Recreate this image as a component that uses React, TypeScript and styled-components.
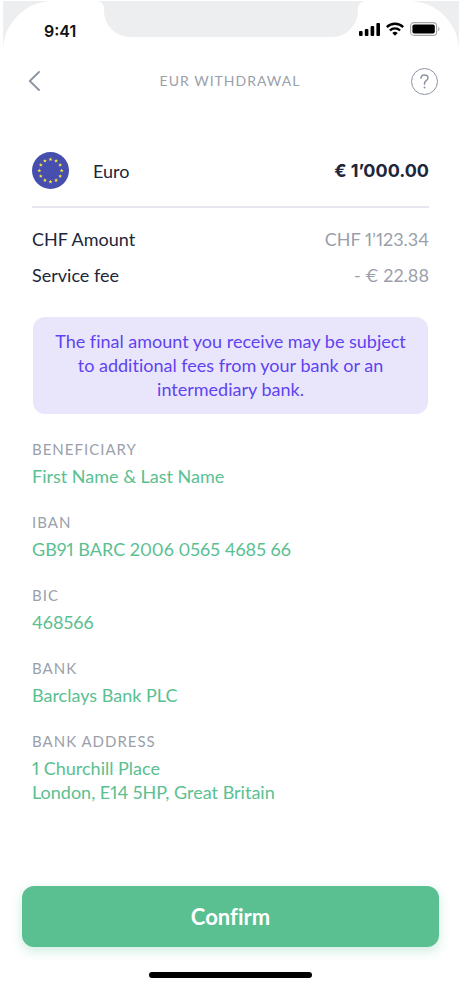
import React from "react";
import styled, { createGlobalStyle } from "styled-components";

const color = {
  ink: "#20263a",
  muted: "#9a9fab",
  green: "#5ac091",
  violet: "#5f43f0",
  lilac: "#e9e6fc",
  line: "#e7e7ef",
  bezel: "#edeef0",
};

const GlobalStyle = createGlobalStyle`
  *, *::before, *::after { box-sizing: border-box; }
  body {
    margin: 0;
    background: #fff;
    font-family: Lato, "Open Sans", sans-serif;
    font-variant-ligatures: none;
    font-variant-numeric: proportional-nums;
    color: ${color.ink};
  }
  button { font: inherit; border: 0; padding: 0; cursor: pointer; }
`;

const Device = styled.div`
  min-height: 100vh;
  padding: 1px 1px 0 3px;
  display: flex;
`;

const Bezel = styled.div`
  flex: 1;
  display: flex;
  background: linear-gradient(${color.bezel} 56px, #fff 56px);
`;

const Screen = styled.div`
  flex: 1;
  display: flex;
  flex-direction: column;
  background: #fff;
  border-radius: 50px 50px 0 0;
`;

const StatusBar = styled.div`
  display: grid;
  grid-template-columns: 101px 1fr 101px;
  height: 50px;
`;

const Time = styled.time`
  padding: 20px 0 0 41px;
  font: 600 16px/20px Inter, sans-serif;
  color: #111;
`;

const Notch = styled.div`
  position: relative;
  height: 36px;
  border-radius: 0 0 26px 26px;
  background: ${color.bezel};

  &::before,
  &::after {
    content: "";
    position: absolute;
    top: 0;
    width: 8px;
    height: 8px;
  }
  &::before {
    right: 100%;
    background: radial-gradient(circle at 0 100%, #fff 8px, ${color.bezel} 8px);
  }
  &::after {
    left: 100%;
    background: radial-gradient(circle at 100% 100%, #fff 8px, ${color.bezel} 8px);
  }
`;

const Indicators = styled.div`
  display: flex;
  gap: 6px;
  align-items: center;
  height: 14px;
  margin: 21px 0 0 1px;
`;

const Header = styled.header`
  display: flex;
  align-items: center;
  justify-content: space-between;
  height: 60px;
  padding: 0 21px 0 16px;
`;

const Title = styled.h1`
  margin: 0;
  font-size: 14px;
  line-height: 20px;
  font-weight: 400;
  letter-spacing: 1px;
  color: ${color.muted};
`;

const IconButton = styled.button`
  display: flex;
  align-items: center;
  justify-content: center;
  width: 30px;
  height: 30px;
  background: none;
  color: #8d93a3;
`;

const HelpButton = styled(IconButton)`
  width: 27px;
  height: 27px;
  border: 1px solid #8d93a3;
  border-radius: 50%;
`;

const Main = styled.main`
  flex: 1;
  padding: 0 30px 0 29px;
  font-size: 18px;
  line-height: 24px;
`;

const Currency = styled.section`
  display: flex;
  align-items: center;
  margin-top: 24px;
  height: 73px;
  border-bottom: 2px solid ${color.line};
`;

const CurrencyName = styled.span`
  flex: 1;
  margin-left: 24px;
`;

const Amount = styled.strong`
  font-family: Inter, sans-serif;
  font-weight: 700;
`;

const Summary = styled.dl`
  display: grid;
  grid-template-columns: 1fr auto;
  row-gap: 12px;
  margin: 19px 0 30px;

  dt, dd { margin: 0; }
  dd { color: ${color.muted}; text-align: right; }
`;

const Notice = styled.p`
  margin: 0 1px 24px;
  padding: 12px 16px 13px;
  border-radius: 12px;
  background: ${color.lilac};
  color: ${color.violet};
  text-align: center;
`;

const Details = styled.dl`
  display: grid;
  gap: 23px;
  margin: 0;
`;

const Label = styled.dt`
  margin-bottom: 4px;
  font-size: 15px;
  line-height: 22px;
  letter-spacing: 1px;
  color: ${color.muted};
`;

const Value = styled.dd`
  margin: 0;
  color: ${color.green};
  white-space: pre-line;
`;

const Footer = styled.footer`
  display: flex;
  flex-direction: column;
  align-items: center;
  gap: 25px;
  padding: 24px 20px 6px 19px;
`;

const ConfirmButton = styled.button`
  && {
    width: 100%;
    height: 61px;
    border-radius: 12px;
    background: ${color.green};
    box-shadow: 0 4px 12px rgba(90, 192, 145, 0.3);
    color: #fff;
    font-size: 22px;
    font-weight: 700;
  }
`;

const HomeIndicator = styled.div`
  width: 163px;
  height: 6px;
  border-radius: 3px;
  background: #000;
`;

const details = [
  { label: "BENEFICIARY", value: "First Name & Last Name" },
  { label: "IBAN", value: "GB91 BARC 2006 0565 4685 66" },
  { label: "BIC", value: "468566" },
  { label: "BANK", value: "Barclays Bank PLC" },
  { label: "BANK ADDRESS", value: "1 Churchill Place\nLondon, E14 5HP, Great Britain" },
];

function Signal() {
  return (
    <svg width="21" height="14" viewBox="0 0 21 14" aria-hidden="true">
      <rect x="0" y="9" width="3.6" height="5" rx="1" />
      <rect x="5.8" y="7" width="3.6" height="7" rx="1" />
      <rect x="11.6" y="4" width="3.6" height="10" rx="1" />
      <rect x="17.4" y="1" width="3.6" height="13" rx="1" />
    </svg>
  );
}

function Wifi() {
  return (
    <svg width="18" height="14" viewBox="0 0 18 14" fill="none" stroke="#000" strokeWidth="2.3" aria-hidden="true">
      <path d="M.8 5.1a11.7 11.7 0 0 1 16.4 0" />
      <path d="M3.9 8.5a7.3 7.3 0 0 1 10.2 0" />
      <path d="M6.3 11a3.9 3.9 0 0 1 5.4 0L9 13.7z" fill="#000" stroke="none" />
    </svg>
  );
}

function Battery() {
  return (
    <svg width="30" height="14" viewBox="0 0 30 14" aria-hidden="true">
      <rect x=".6" y=".6" width="26" height="12.8" rx="3.4" fill="none" stroke="#a6a6a6" strokeWidth="1.1" />
      <rect x="2.4" y="2.4" width="22.4" height="9.2" rx="1.8" />
      <path d="M28.2 4.7c1.8.8 1.8 3.8 0 4.6z" fill="#a6a6a6" />
    </svg>
  );
}

function EuroFlag() {
  return (
    <svg width="37" height="37" viewBox="0 0 37 37" aria-hidden="true">
      <circle cx="18.5" cy="18.5" r="18.5" fill="#464fae" />
      {Array.from({ length: 12 }, (_, i) => (
        <path
          key={i}
          fill="#f4e33d"
          transform={`translate(${18.5 + 11.2 * Math.sin((i * Math.PI) / 6)} ${18.5 - 11.2 * Math.cos((i * Math.PI) / 6)})`}
          d="M0-1.9.6-.6 1.9-.5.9.4 1.2 1.7 0 1-1.2 1.7-.9.4-1.9-.5-.6-.6z"
        />
      ))}
    </svg>
  );
}

export default function App() {
  return (
    <>
      <GlobalStyle />
      <Device>
        <Bezel>
          <Screen>
            <StatusBar>
              <Time>9:41</Time>
              <Notch />
              <Indicators>
                <Signal />
                <Wifi />
                <Battery />
              </Indicators>
            </StatusBar>
            <Header>
              <IconButton type="button" aria-label="Back">
                <svg width="12" height="20" viewBox="0 0 12 20" fill="none" stroke="currentColor" strokeWidth="1.8" strokeLinecap="round" strokeLinejoin="round">
                  <path d="M11 1 1.8 10l9.2 9" />
                </svg>
              </IconButton>
              <Title>EUR WITHDRAWAL</Title>
              <HelpButton type="button" aria-label="Help">
                <svg width="9" height="15" viewBox="0 0 9 15" fill="none" stroke="currentColor" strokeWidth="1.5" strokeLinecap="round">
                  <path d="M1 4.2C1 2.1 2.5 1 4.5 1S8 2.2 8 4c0 2.5-3.5 2.6-3.5 5.2v1" />
                  <path d="M4.5 13.4v.2" strokeWidth="1.9" />
                </svg>
              </HelpButton>
            </Header>
            <Main>
              <Currency>
                <EuroFlag />
                <CurrencyName>Euro</CurrencyName>
                <Amount>€ 1’000.00</Amount>
              </Currency>
              <Summary>
                <dt>CHF Amount</dt>
                <dd>CHF 1’123.34</dd>
                <dt>Service fee</dt>
                <dd>- € 22.88</dd>
              </Summary>
              <Notice>
                The final amount you receive may be subject to additional fees from your bank or an intermediary bank.
              </Notice>
              <Details>
                {details.map(({ label, value }) => (
                  <div key={label}>
                    <Label>{label}</Label>
                    <Value>{value}</Value>
                  </div>
                ))}
              </Details>
            </Main>
            <Footer>
              <ConfirmButton type="button">Confirm</ConfirmButton>
              <HomeIndicator />
            </Footer>
          </Screen>
        </Bezel>
      </Device>
    </>
  );
}
